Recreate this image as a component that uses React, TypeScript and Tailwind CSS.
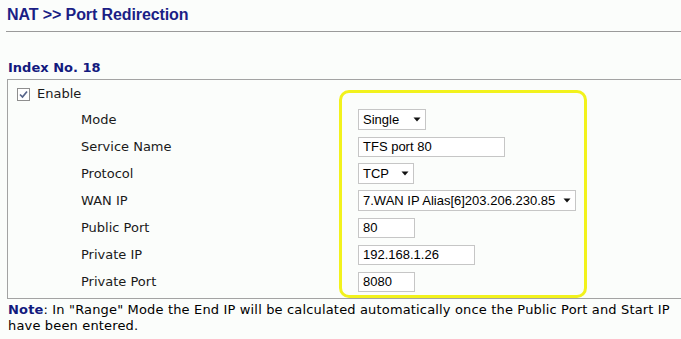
import React from 'react'

const verdana = "font-['DejaVu_Sans',Verdana,sans-serif]"
const arial = "font-['Liberation_Sans',Arial,sans-serif]"

function Select({ value, width }: { value: string; width: string }) {
  return (
    <div
      className={`${width} ${arial} flex h-[21px] items-center justify-between border border-[#c6c6c6] bg-white pl-[4px] pr-[4px] text-[13px] text-black`}
    >
      <span className="whitespace-nowrap">{value}</span>
      <svg width="8" height="5" viewBox="0 0 8 5" className="ml-2 shrink-0">
        <polygon points="0.5,0.5 7.5,0.5 4,4.5" fill="#111" />
      </svg>
    </div>
  )
}

function TextInput({ value, width }: { value: string; width: string }) {
  return (
    <div
      className={`${width} ${arial} flex h-[20px] items-center border border-[#c6c6c6] bg-white pl-[4px] text-[13px] text-black`}
    >
      <span className="whitespace-nowrap">{value}</span>
    </div>
  )
}

type Row = { label: string; field: React.ReactNode }

const rows: Row[] = [
  { label: 'Mode', field: <Select value="Single" width="w-[68px]" /> },
  { label: 'Service Name', field: <TextInput value="TFS port 80" width="w-[147px]" /> },
  { label: 'Protocol', field: <Select value="TCP" width="w-[56px]" /> },
  { label: 'WAN IP', field: <Select value="7.WAN IP Alias[6]203.206.230.85" width="w-[218px]" /> },
  { label: 'Public Port', field: <TextInput value="80" width="w-[57px]" /> },
  { label: 'Private IP', field: <TextInput value="192.168.1.26" width="w-[117px]" /> },
  { label: 'Private Port', field: <TextInput value="8080" width="w-[57px]" /> },
]

export default function App() {
  return (
    <div className="relative h-[339px] w-[681px] overflow-hidden bg-[#fbfdfb]">
      <h1
        className={`${arial} h-[31px] pl-[7px] pt-[5px] text-[16px] leading-[20px] font-bold tracking-[-0.1px] text-[#1b1f86]`}
      >
        NAT &gt;&gt; Port Redirection
      </h1>
      <div className="ml-[6px] border-t border-[#9a9a9a]" />

      <h2 className={`${verdana} mt-[28px] pl-[8px] text-[13px] leading-[16px] font-bold text-[#121a7e]`}>
        Index No. 18
      </h2>

      <div className={`${verdana} ml-[7px] mt-[3px] border-t border-b border-l border-[#a3a3a3] pb-[3px] text-[13px] text-[#1a1a1a]`}>
        <div className="flex h-[26px] items-center gap-[7px] pl-[9px] pt-[2px]">
          <span className="flex h-[13px] w-[13px] items-center justify-center border border-[#8e8e8e] bg-white">
            <svg width="11" height="11" viewBox="0 0 11 11">
              <path d="M2 5.5 L4.5 8 L9 2.5" fill="none" stroke="#56648a" strokeWidth="1.7" />
            </svg>
          </span>
          <span>Enable</span>
        </div>
        {rows.map((r) => (
          <div key={r.label} className="flex h-[27px] items-center">
            <div className="w-[350px] pl-[73px]">{r.label}</div>
            <div>{r.field}</div>
          </div>
        ))}
      </div>

      <p className={`${verdana} mt-[3px] pl-[8px] pr-[4px] text-[13px] leading-[16px] tracking-[0.16px] text-black`}>
        <b className="font-bold text-[#121a7e]">Note</b>: In "Range" Mode the End IP will be calculated
        automatically once the Public Port and Start IP have been entered.
      </p>

      {/* highlight annotation */}
      <div className="pointer-events-none absolute left-[339px] top-[90px] h-[208px] w-[248px] rounded-[10px] border-[3px] border-[#f2f21c]" />
    </div>
  )
}
